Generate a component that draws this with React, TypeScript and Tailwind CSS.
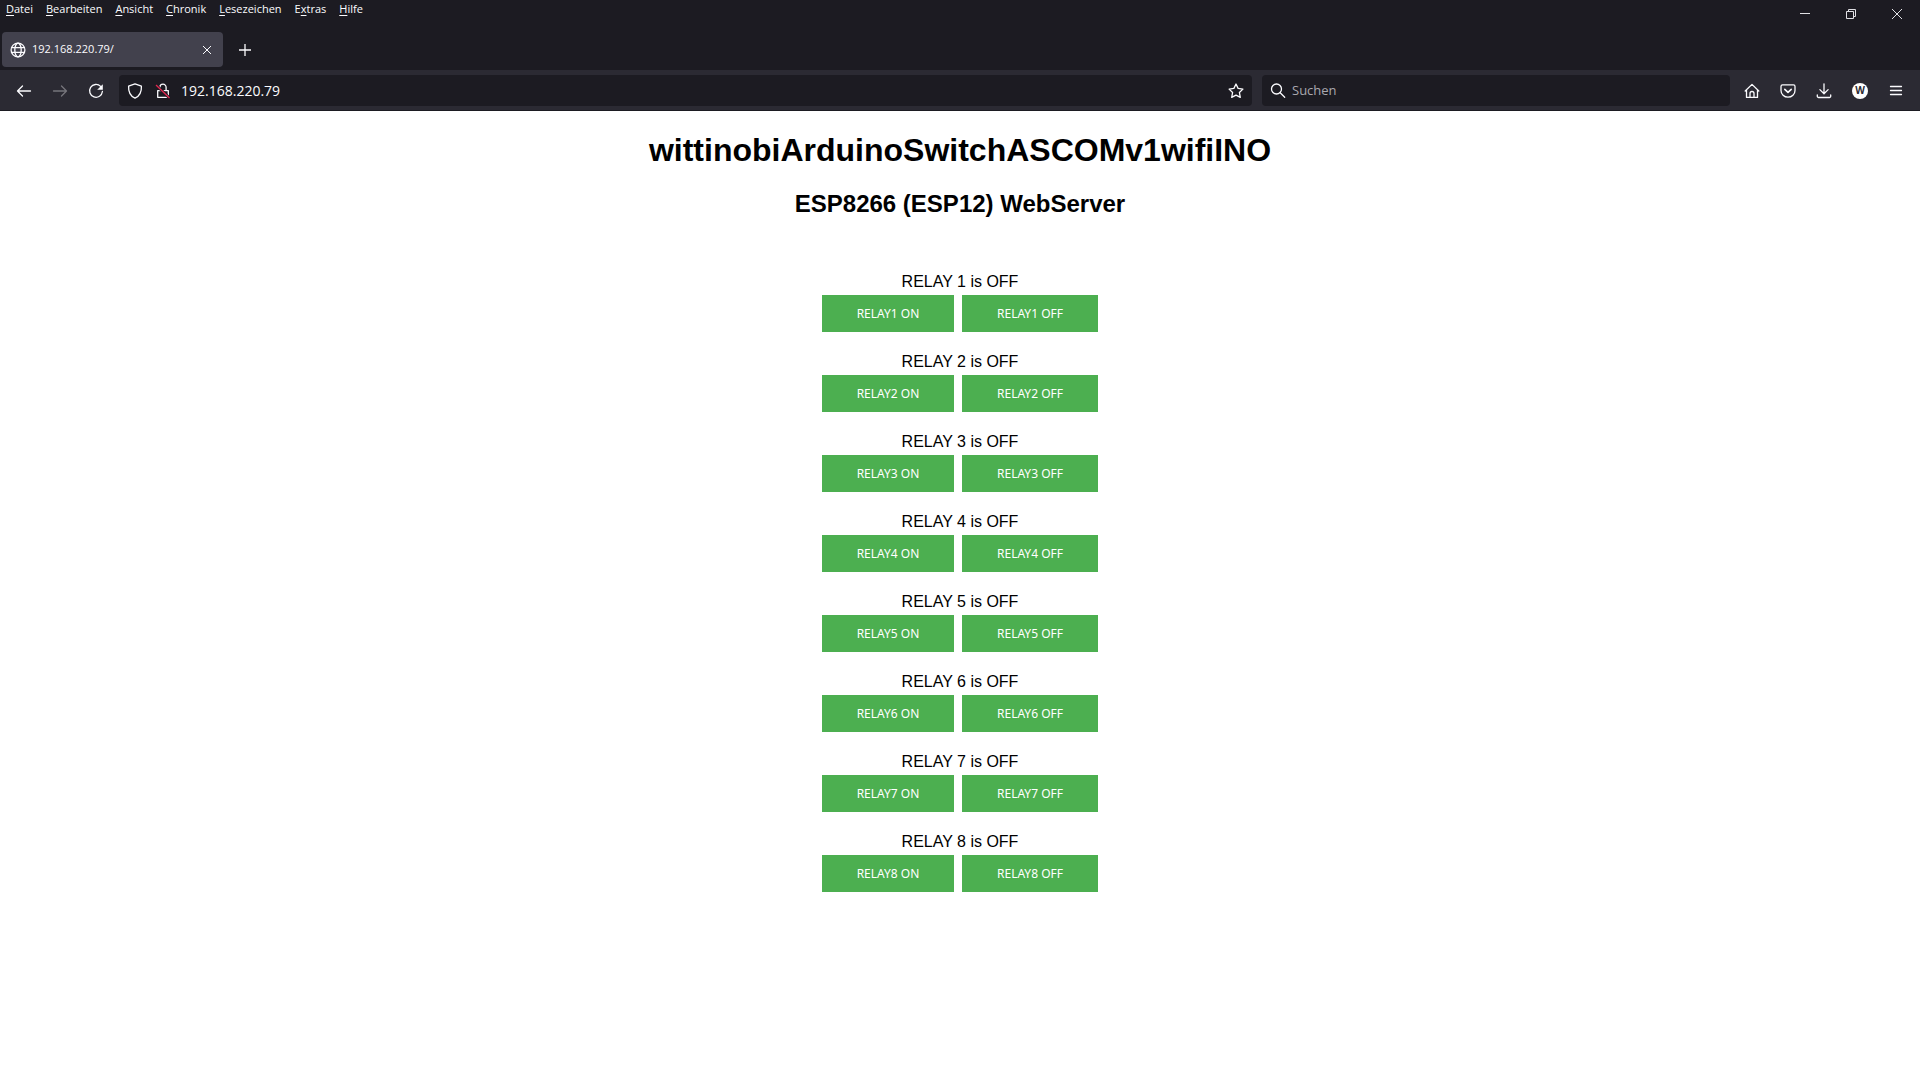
import type { ReactNode } from "react";

const menus = [
  { before: "", key: "D", after: "atei" },
  { before: "", key: "B", after: "earbeiten" },
  { before: "", key: "A", after: "nsicht" },
  { before: "", key: "C", after: "hronik" },
  { before: "", key: "L", after: "esezeichen" },
  { before: "E", key: "x", after: "tras" },
  { before: "", key: "H", after: "ilfe" },
];

const relays = [1, 2, 3, 4, 5, 6, 7, 8];

function Icon({ children }: { children: ReactNode }) {
  return (
    <svg
      viewBox="0 0 16 16"
      className="size-4 shrink-0"
      fill="none"
      stroke="currentColor"
      strokeWidth="1.3"
      strokeLinecap="round"
      strokeLinejoin="round"
      aria-hidden="true"
    >
      {children}
    </svg>
  );
}

function MenuBar() {
  return (
    <div className="flex h-7 items-start justify-between">
      <nav className="flex gap-[13px] pl-1.5 text-[11px] leading-[18px] text-[#fbfbfe]">
        {menus.map((m) => (
          <button key={m.key} type="button">
            {m.before}
            <span className="underline underline-offset-2">{m.key}</span>
            {m.after}
          </button>
        ))}
      </nav>
      <div className="flex text-[#e0e0e4]">
        <button type="button" aria-label="Minimieren" className="flex h-7 w-[46px] items-center justify-center">
          <svg viewBox="0 0 10 10" className="size-2.5" stroke="currentColor" aria-hidden="true">
            <path d="M0 4.5h10" />
          </svg>
        </button>
        <button type="button" aria-label="Verkleinern" className="flex h-7 w-[46px] items-center justify-center">
          <svg viewBox="0 0 10 10" className="size-2.5" fill="none" stroke="currentColor" aria-hidden="true">
            <path d="M.5 2.5h7v7h-7zM2.5 2.5v-2h7v7h-2" />
          </svg>
        </button>
        <button type="button" aria-label="Schließen" className="flex h-7 w-[46px] items-center justify-center">
          <svg viewBox="0 0 10 10" className="size-2.5" stroke="currentColor" aria-hidden="true">
            <path d="M0 0l10 10M10 0L0 10" />
          </svg>
        </button>
      </div>
    </div>
  );
}

function TabBar() {
  return (
    <div className="flex h-[42px] items-center pt-px pl-0.5 text-[#fbfbfe]">
      <div className="flex h-[35px] w-[221px] items-center rounded bg-[#42414d] pr-2 pl-2">
        <Icon>
          <circle cx="8" cy="8" r="6.9" />
          <ellipse cx="8" cy="8" rx="3.2" ry="6.9" />
          <path d="M1.5 5.6h13M1.5 10.4h13" />
        </Icon>
        <span className="ml-1.5 flex-1 text-[11px]">192.168.220.79/</span>
        <button type="button" aria-label="Tab schließen" className="flex size-4 items-center justify-center">
          <svg viewBox="0 0 8 8" className="size-2" stroke="currentColor" aria-hidden="true">
            <path d="M0 0l8 8M8 0L0 8" />
          </svg>
        </button>
      </div>
      <button type="button" aria-label="Neuer Tab" className="ml-3.5 flex size-4 items-center justify-center">
        <svg viewBox="0 0 12 12" className="size-3" stroke="currentColor" strokeWidth="1.3" aria-hidden="true">
          <path d="M6 0v12M0 6h12" />
        </svg>
      </button>
    </div>
  );
}

function Toolbar() {
  return (
    <div className="flex h-[41px] items-center border-b border-[#1c1b22] bg-[#2b2a33] px-4 pt-px text-[#fbfbfe]">
      <div className="flex gap-5">
        <button type="button" aria-label="Zurück">
          <Icon>
            <path d="M14.500 8H1.500M6.500 3L1.500 8l5 5" />
          </Icon>
        </button>
        <button type="button" aria-label="Vor" disabled className="text-[#76757c]">
          <Icon>
            <path d="M1.500 8h13M9.500 3l5 5-5 5" />
          </Icon>
        </button>
        <button type="button" aria-label="Neu laden">
          <Icon>
            <path d="M12.6 3.4A6.4 6.4 0 1 0 14.4 8.5" />
            <path d="M14.8 1.200v5.600h-5.600z" fill="currentColor" stroke="none" />
          </Icon>
        </button>
      </div>

      <div className="ml-[15px] flex h-[31px] flex-1 items-center rounded bg-[#1c1b22] px-2">
        <Icon>
          <path d="M8 .9l6.4 2.3c.3 5.2-1.4 9.6-6.4 12C3 12.8 1.3 8.4 1.6 3.2z" />
        </Icon>
        <div className="ml-3">
          <Icon>
            <path d="M4.900 7V4.300a3.100 3.100 0 0 1 6.200 0V7M2.700 14.300V7.600h10.600v6.700z" />
            <path d="M1 2l13.500 13" stroke="#1c1b22" strokeWidth="3" strokeLinecap="butt" />
            <path d="M1 2l13.500 13" stroke="#e22850" strokeLinecap="butt" />
          </Icon>
        </div>
        <input
          type="text"
          aria-label="Adresse"
          defaultValue="192.168.220.79"
          className="ml-2.5 min-w-0 flex-1 bg-transparent text-sm outline-none"
        />
        <button type="button" aria-label="Lesezeichen hinzufügen">
          <Icon>
            <path d="M8 1l2.1 4.4 4.8.7-3.5 3.4.9 4.9L8 12.1l-4.300 2.300.9-4.900L1.100 6.100l4.800-.7z" />
          </Icon>
        </button>
      </div>

      <div className="ml-2.5 flex h-[31px] w-[468px] items-center rounded bg-[#1c1b22] pl-2">
        <Icon>
          <circle cx="6.500" cy="6" r="5" />
          <path d="M10.200 9.700l4.500 4.500" />
        </Icon>
        <input
          type="search"
          aria-label="Suchen"
          placeholder="Suchen"
          className="ml-1.5 min-w-0 flex-1 bg-transparent text-[13px] outline-none placeholder:text-[#a9a8af]"
        />
      </div>

      <div className="ml-3.5 flex gap-5">
        <button type="button" aria-label="Startseite">
          <Icon>
            <path d="M1.2 8L8 1.4 14.8 8M2.5 7v7.4h11V7M6 14.2v-3.7a2 2 0 0 1 4 0v3.7" />
          </Icon>
        </button>
        <button type="button" aria-label="Pocket">
          <Icon>
            <path d="M2.5 1.9h11a1.500 1.500 0 0 1 1.500 1.500v4a7 6.800 0 0 1-14 0v-4a1.500 1.500 0 0 1 1.500-1.500z" />
            <path d="M4.800 6.300L8 9.300l3.200-3" strokeWidth="1.600" />
          </Icon>
        </button>
        <button type="button" aria-label="Downloads">
          <Icon>
            <path d="M8 .8v9.7M3.9 6.600L8 10.700l4.100-4.100M1.300 12v1.200a1.300 1.300 0 0 0 1.300 1.300h10.800a1.300 1.300 0 0 0 1.300-1.300V12" />
          </Icon>
        </button>
        <button
          type="button"
          aria-label="Konto"
          className="flex size-4 items-center justify-center rounded-full bg-white text-[10px] font-bold text-[#2b2a33]"
        >
          W
        </button>
        <button type="button" aria-label="Menü">
          <Icon>
            <path d="M2.500 3.500h11M2.500 7.500h11M2.500 11.500h11" />
          </Icon>
        </button>
      </div>
    </div>
  );
}

function Relay({ id }: { id: number }) {
  const button = "h-[37px] bg-[#4caf50] font-['Noto_Sans',sans-serif] text-xs text-white";
  return (
    <section className="flex flex-col items-center">
      <p className="text-base leading-[27px]">RELAY {id} is OFF</p>
      <div className="flex gap-2">
        <button type="button" className={`${button} w-[132px]`}>
          RELAY{id} ON
        </button>
        <button type="button" className={`${button} w-[136px]`}>
          RELAY{id} OFF
        </button>
      </div>
    </section>
  );
}

export default function App() {
  return (
    <div className="min-h-screen bg-white font-['Open_Sans','Noto_Sans',sans-serif]">
      <header className="bg-[#1c1b22]">
        <MenuBar />
        <TabBar />
        <Toolbar />
      </header>
      <main className="flex flex-col items-center pt-[21px] font-['Liberation_Sans',Arial,sans-serif] text-black">
        <h1 className="text-[32px] leading-9 font-bold">wittinobiArduinoSwitchASCOMv1wifiINO</h1>
        <h2 className="mt-[22px] text-2xl leading-7 font-bold">ESP8266 (ESP12) WebServer</h2>
        <div className="mt-[50px] flex flex-col gap-4">
          {relays.map((id) => (
            <Relay key={id} id={id} />
          ))}
        </div>
      </main>
    </div>
  );
}
